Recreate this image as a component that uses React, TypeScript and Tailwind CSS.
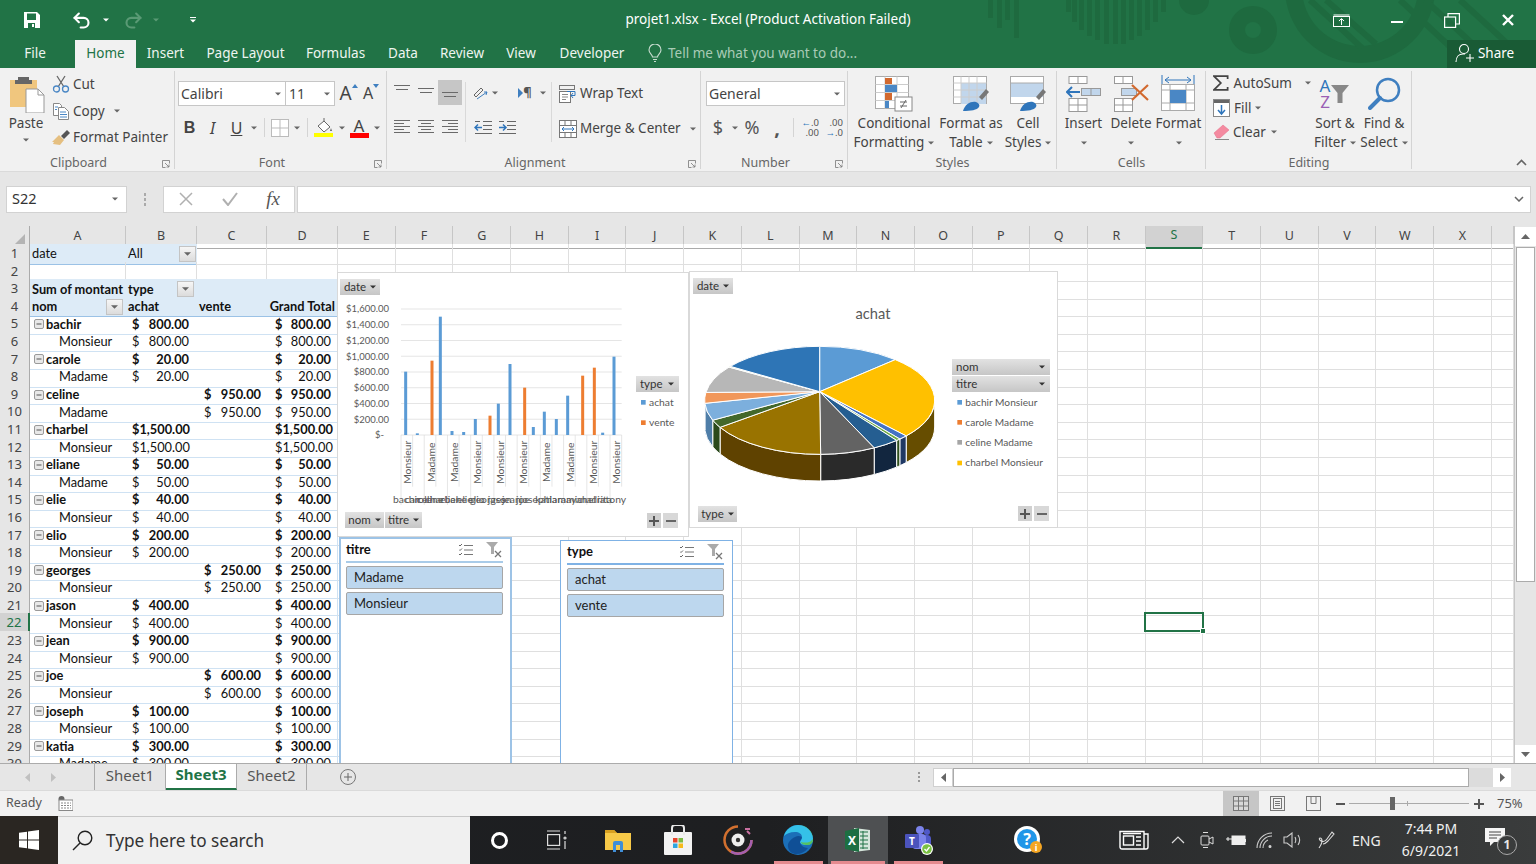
import React from "react";
import { Undo2, Redo2 } from "lucide-react";

const Caret = ({ c = "#666", w = 7 }: { c?: string; w?: number }) => (
  <svg width={w} height={4} viewBox="0 0 8 4" className="shrink-0"><path d="M0 0h8L4 4z" fill={c} /></svg>
);

/* ---------- Title bar ---------- */
function TitleArt() {
  const bars = [[988,18],[997,28],[1005,20],[1014,38],[1066,12],[1072,22],[1079,30],[1087,36],[1095,40],[1104,44],[1113,44],[1121,44],[1129,40],[1137,36],[1145,30],[1153,22],[1161,12]];
  return (
    <svg className="absolute left-[976px] top-0" width={560} height={68} viewBox="976 0 560 68">
      <g fill="#1e6a3f">
        {bars.map(([x, h]) => <rect key={x} x={x} y={0} width={5} height={h} />)}
        <circle cx={1194} cy={0} r={15} />
        <circle cx={1253} cy={30} r={24} />
        <circle cx={1360} cy={-12} r={75} />
      </g>
      <circle cx={1253} cy={30} r={8} fill="#217346" />
      <circle cx={1360} cy={-12} r={58} fill="#217346" />
      <g stroke="#1e6a3f" strokeWidth={6}>
        <path d="M1310 0l52 48M1326 0l50 44M1400 0l60 56M1425 0l50 46M1460 0l50 46" />
      </g>
    </svg>
  );
}

function TitleBar() {
  return (
    <div className="relative h-[68px] bg-[#217346] text-white shrink-0 overflow-hidden">
      <TitleArt />
      <div className="relative flex h-[40px] items-center">
        <div className="w-[64px] flex justify-center">
          <svg width={16} height={16} viewBox="0 0 16 16"><path d="M0 0h13l3 3v13H0z" fill="#fff" /><path d="M3 1.500h9V8H3z" fill="#217346" /><path d="M4 11h7v5H4z" fill="#217346" /><path d="M8 12h2v3H8z" fill="#fff" /></svg>
        </div>
        <div className="w-[28px] flex justify-end"><Undo2 size={21} strokeWidth={2.400} color="#fff" /></div>
        <div className="w-[24px] flex justify-center pl-[4px]"><Caret c="#fff" w={6} /></div>
        <div className="w-[28px] flex justify-end"><Redo2 size={21} strokeWidth={2.400} color="#5a9a75" /></div>
        <div className="w-[24px] flex justify-center"><Caret c="#5a9a75" w={6} /></div>
        <div className="ml-[11px] w-[26px] flex flex-col items-center gap-[1px] pl-[2px]"><div className="w-[6px] h-[1px] bg-white" /><Caret c="#fff" w={6} /></div>
        <div className="absolute left-0 right-0 text-center text-[13.500px] pb-[1px] pointer-events-none">projet1.xlsx - Excel (Product Activation Failed)</div>
        <div className="ml-auto flex items-center">
          <div className="w-[55px] flex justify-center">
            <svg width={17} height={13} viewBox="0 0 17 13"><rect x=".5" y="2.500" width="16" height="10" fill="none" stroke="#fff" /><path d="M.5 1h16" stroke="#fff" /><path d="M8.500 11V5M6 7l2.500-2.500L11 7" fill="none" stroke="#fff" /></svg>
          </div>
          <div className="w-[55px] flex justify-center"><div className="w-[12px] h-[2px] bg-white mt-[4px]" /></div>
          <div className="w-[56px] flex justify-center">
            <svg width={16} height={15} viewBox="0 0 16 15" fill="none" stroke="#fff" strokeWidth={1.200}><rect x=".6" y="4" width="11" height="10.400" /><path d="M4 4V.6h11.400V11H11.600" /></svg>
          </div>
          <div className="w-[56px] flex justify-center">
            <svg width={12} height={12} viewBox="0 0 12 12" stroke="#fff" strokeWidth={2.400}><path d="M1 1l10 10M11 1L1 11" /></svg>
          </div>
        </div>
      </div>
      <div className="relative flex h-[28px] items-center text-[13.500px] text-[#eef5f0]">
        <div className="w-[75px] pl-[1px] text-center pr-[6px] pb-[2px]">File</div>
        <div className="w-[61px] h-[28px] bg-[#f1f1f1] text-[#217346] flex items-center justify-center pb-[2px]">Home</div>
        <div className="w-[59px] text-center pb-[2px]">Insert</div>
        <div className="w-[101px] text-center pb-[2px]">Page Layout</div>
        <div className="w-[79px] text-center pb-[2px]">Formulas</div>
        <div className="w-[56px] text-center pb-[2px]">Data</div>
        <div className="w-[62px] text-center pb-[2px]">Review</div>
        <div className="w-[56px] text-center pb-[2px]">View</div>
        <div className="w-[86px] text-center pb-[2px]">Developer</div>
        <div className="ml-[13px] flex items-center gap-[6px] text-[#a9cbb6] pb-[2px]">
          <svg width={14} height={18} viewBox="0 0 14 18" fill="none" stroke="#c7dccf" strokeWidth={1.100}><path d="M4.500 13c0-2.500-3.500-3.500-3.500-7a6 6 0 0 1 12 0c0 3.500-3.500 4.500-3.500 7z" /><path d="M5 15.500h4M6 17.500h2" /></svg>
          <span>Tell me what you want to do...</span>
        </div>
        <div className="absolute left-[1447px] top-0 w-[89px] h-[28px] bg-[#195b35] flex items-center justify-center gap-[3px] pr-[14px] pb-[2px]">
          <svg width={20} height={20} viewBox="0 0 20 20" fill="none" stroke="#fff" strokeWidth={1.100}><circle cx="9" cy="6" r="4.500" /><path d="M1 19c0-5 3-8 7-8h2" /><path d="M15 11v8M11 15h8" /></svg>
          <span className="text-white">Share</span>
        </div>
      </div>
    </div>
  );
}

/* ---------- Ribbon helpers ---------- */
const Launcher = () => (
  <div className="w-[18px] flex justify-center items-center shrink-0">
    <svg width={8} height={8} viewBox="0 0 8 8" fill="none" stroke="#777" strokeWidth={.800}><path d="M7.500 3.500V.5H.5v7h3" /><path d="M3 3l4 4M7 4.500V7H4.500" /></svg>
  </div>
);

function Group({ w, label, launcher, children }: { w: string; label: string; launcher?: boolean; children: React.ReactNode }) {
  return (
    <div className={`${w} h-[104px] flex flex-col shrink-0 relative`}>
      <div className="h-[87px] flex">{children}</div>
      <div className="h-[17px] flex items-center text-[12.500px] text-[#666]">
        <div className="flex-1 text-center">{label}</div>
        {launcher && <Launcher />}
      </div>
      <div className="absolute right-0 top-[3px] bottom-[3px] w-[1px] bg-[#d4d4d4]" />
    </div>
  );
}

const Big = ({ w, lines, icon }: { w: string; lines: string[]; icon: React.ReactNode }) => (
  <div className={`${w} flex flex-col items-center shrink-0 pt-[6px] text-[13.500px] leading-[19px] text-[#444]`}>
    <div className="h-[39px] flex items-center justify-center">{icon}</div>
    <div className="mt-[1px] whitespace-nowrap">{lines[0]}</div>
    <div className="flex items-center gap-[4px] whitespace-nowrap h-[19px]">
      {lines[1] && <span>{lines[1]}</span>}
      <Caret w={6} />
    </div>
  </div>
);

const Lines = ({ kind }: { kind: "l" | "c" | "r" }) => {
  const long = [3, 9, 15];
  const short = [6, 12];
  const x = (len: number) => (kind === "l" ? 1 : kind === "r" ? 17 - len : 9 - len / 2);
  return (
    <svg width={18} height={17} viewBox="0 0 18 17" stroke="#6a6a6a">
      {long.map(y => <path key={y} d={`M1 ${y - 1.500}h16`} />)}
      {short.map(y => <path key={y} d={`M${x(10)} ${y - 1.500}h10`} />)}
    </svg>
  );
};

const VLines = () => (
  <svg width={18} height={9} viewBox="0 0 18 9" stroke="#6a6a6a"><path d="M1 .500h16M3 4.500h12" /></svg>
);

/* ---------- Ribbon ---------- */
function Clipboard() {
  return (
    <Group w="w-[175px]" label="Clipboard" launcher>
      <div className="w-[52px] flex flex-col items-center pt-[7px] pl-[2px]">
        <svg width={36} height={38} viewBox="0 0 36 38">
          <rect x="1" y="5" width="27" height="27" fill="#f0c67e" />
          <path d="M9 5V2h11v3h3v4H6V5z" fill="#666" />
          <path d="M17 14h12l6 6v18H17z" fill="#fff" stroke="#999" />
          <path d="M29 14v6h6" fill="none" stroke="#999" />
        </svg>
        <div className="text-[13.500px] leading-[18px] text-[#444] mt-[1px] -ml-[2px]">Paste</div>
        <div className="mt-[6px] -ml-[2px]"><Caret w={6} /></div>
      </div>
      <div className="flex flex-col pt-[3px] text-[13.500px] text-[#444]">
        <div className="h-[26.500px] flex items-center gap-[3px]">
          <svg width={18} height={18} viewBox="0 0 18 18" fill="none"><path d="M5 1l7 11M13 1L6 12" stroke="#666" strokeWidth={1.300} /><circle cx="4.500" cy="14" r="3" stroke="#4a87c5" strokeWidth={1.300} /><circle cx="13.500" cy="14" r="3" stroke="#4a87c5" strokeWidth={1.300} /></svg>
          <span>Cut</span>
        </div>
        <div className="h-[26.500px] flex items-center gap-[3px]">
          <svg width={18} height={18} viewBox="0 0 18 18" fill="none" stroke="#888"><path d="M1.500 1.500h6l2 2v10h-8z" fill="#fff" /><path d="M6.500 5.500h6l4 4v8h-10z" fill="#fff" /><path d="M8 10h6M8 12.500h7M8 15h7M3 5h3M3 7.500h2" stroke="#4a87c5" /></svg>
          <span>Copy</span>
          <div className="ml-[6px]"><Caret w={6} /></div>
        </div>
        <div className="h-[26.500px] flex items-center gap-[2px]">
          <svg width={19} height={17} viewBox="0 0 19 17"><path d="M7 6l5 5-4 5-7-1 1-2-2 0z" fill="#e5bf80" /><path d="M9 7l6-6 3 3-6 6z" fill="#555" /></svg>
          <span>Format Painter</span>
        </div>
      </div>
    </Group>
  );
}

function Font() {
  return (
    <Group w="w-[212px]" label="Font" launcher>
      <div className="pl-[3px] pt-[13px] flex flex-col">
        <div className="flex h-[25px] items-center text-[14px] text-[#444]">
          <div className="w-[108px] h-[25px] bg-white border border-[#c6c6c6] flex items-center justify-between pl-[2px] pr-[4px]"><span>Calibri</span><Caret w={6} /></div>
          <div className="w-[49px] h-[25px] bg-white border border-[#c6c6c6] border-l-0 flex items-center justify-between pl-[3px] pr-[4px]"><span>11</span><Caret w={6} /></div>
          <div className="w-[25px] flex justify-center items-start text-[19px] leading-[19px] pl-[2px]"><span>A</span><svg width={6} height={4} viewBox="0 0 6 4"><path d="M3 0l3 4H0z" fill="#3f7fc0" /></svg></div>
          <div className="w-[22px] flex justify-center items-start text-[16px] leading-[19px]"><span>A</span><svg width={6} height={4} viewBox="0 0 6 4"><path d="M0 0h6L3 4z" fill="#3f7fc0" /></svg></div>
        </div>
        <div className="flex h-[25px] items-center mt-[9px] text-[#444]">
          <div className="w-[23px] text-center font-bold text-[16px] font-['Liberation_Sans',sans-serif]">B</div>
          <div className="w-[23px] text-center italic text-[16px] font-['Noto_Sans',sans-serif]">I</div>
          <div className="w-[25px] text-center underline text-[16px]">U</div>
          <div className="ml-[2px]"><Caret w={6} /></div>
          <div className="w-[1px] h-[19px] bg-[#d4d4d4] ml-[7px]" />
          <div className="w-[24px] flex justify-end">
            <svg width={18} height={18} viewBox="0 0 18 18" fill="#fff" stroke="#bbb"><rect x=".5" y=".5" width="17" height="17" /><path d="M9 .5v17M.5 9h17" /></svg>
          </div>
          <div className="ml-[5px]"><Caret w={6} /></div>
          <div className="w-[1px] h-[19px] bg-[#d4d4d4] ml-[7px]" />
          <div className="w-[26px] flex justify-center ml-[3px]">
            <svg width={20} height={20} viewBox="0 0 20 20"><path d="M4 8l6-5 6 6-6 5z" fill="#fff" stroke="#666" /><path d="M10 3V0" stroke="#666" /><path d="M17 10l1 3h-2z" fill="#666" /><rect x="0" y="15" width="19" height="4" fill="#ffff00" /></svg>
          </div>
          <div className="ml-[2px]"><Caret w={6} /></div>
          <div className="w-[26px] flex flex-col items-center ml-[1px]">
            <span className="text-[17px] leading-[15px]">A</span>
            <div className="w-[19px] h-[5px] bg-[#ff0000]" />
          </div>
          <div className="ml-[2px]"><Caret w={6} /></div>
        </div>
      </div>
    </Group>
  );
}

const Slot = ({ w = "w-[24px]", active, children }: { w?: string; active?: boolean; children: React.ReactNode }) => (
  <div className={`${w} h-[25px] flex items-center justify-center shrink-0 ${active ? "bg-[#c6c6c6]" : ""}`}>{children}</div>
);

function Alignment() {
  return (
    <Group w="w-[314px]" label="Alignment" launcher>
      <div className="pl-[3px] pt-[12px] flex">
        <div className="flex flex-col gap-[10px]">
          <div className="flex">
            <Slot><div className="mb-[6px]"><VLines /></div></Slot>
            <Slot><VLines /></Slot>
            <Slot active><div className="mt-[7px]"><VLines /></div></Slot>
          </div>
          <div className="flex">
            <Slot><Lines kind="l" /></Slot>
            <Slot><Lines kind="c" /></Slot>
            <Slot><Lines kind="r" /></Slot>
          </div>
        </div>
        <div className="w-[1px] h-[60px] bg-[#d9d9d9] ml-[3px] mt-[2px]" />
        <div className="flex flex-col gap-[10px]">
          <div className="flex items-center">
            <Slot w="w-[38px]">
              <div className="flex items-center gap-[3px] pl-[1px]">
                <svg width={16} height={14} viewBox="0 0 16 14" fill="none" stroke="#666"><path d="M1 9l7-7 2 2-7 7z" /><path d="M4 13l10-7M14 6l-3 0M14 6l-1 3" stroke="#3f7fc0" /></svg>
                <Caret w={6} />
              </div>
            </Slot>
            <Slot w="w-[44px]">
              <div className="flex items-center gap-[8px] pl-[12px] text-[13px] text-[#555]">
                <svg width={5} height={10} viewBox="0 0 5 10"><path d="M0 0l5 5-5 5z" fill="#3f7fc0" /></svg>
                <span className="-ml-[8px] font-bold">¶</span>
                <Caret w={6} />
              </div>
            </Slot>
          </div>
          <div className="flex">
            <div className="w-[5px]" />
            <Slot>
              <svg width={18} height={15} viewBox="0 0 18 15" fill="none" stroke="#666"><path d="M9 1.500h9M9 5.500h9M9 9.500h9M1 13.500h17M1 1.500h5" /><path d="M8 7.500H1M4 4.500l-3 3 3 3" stroke="#2f75bb" strokeWidth={1.500} /></svg>
            </Slot>
            <Slot>
              <svg width={18} height={15} viewBox="0 0 18 15" fill="none" stroke="#666"><path d="M9 1.500h9M9 5.500h9M9 9.500h9M1 13.500h17M1 1.500h5" /><path d="M1 7.500h7M5 4.500l3 3-3 3" stroke="#2f75bb" strokeWidth={1.500} /></svg>
            </Slot>
          </div>
        </div>
        <div className="w-[1px] h-[60px] bg-[#d9d9d9] ml-[3px] mt-[2px]" />
        <div className="flex flex-col gap-[10px] pl-[7px] pt-[1px] text-[13.500px] text-[#444]">
          <div className="h-[25px] flex items-center gap-[3px]">
            <svg width={18} height={18} viewBox="0 0 18 18" fill="none" stroke="#777"><rect x=".5" y=".5" width="15" height="4" /><rect x=".5" y="6.500" width="11" height="11" fill="#fff" /><path d="M3 9.500h6M3 12h6M3 14.500h4" stroke="#888" /><path d="M8 6.500h8v4h-4M14 8l-2 2.500 2 2.500" stroke="#2f75bb" /></svg>
            <span>Wrap Text</span>
          </div>
          <div className="h-[25px] flex items-center gap-[3px]">
            <svg width={18} height={18} viewBox="0 0 18 18" fill="#fff" stroke="#777"><rect x=".5" y=".5" width="17" height="17" /><path d="M.5 5.500h17M.5 12.500h17M6 .5v5M12 .5v5M6 12.500v5M12 12.500v5" /><path d="M3 9h12M5 7l-2 2 2 2M13 7l2 2-2 2" stroke="#2f75bb" fill="none" /></svg>
            <span>Merge &amp; Center</span>
            <div className="ml-[6px]"><Caret w={6} /></div>
          </div>
        </div>
      </div>
    </Group>
  );
}

function NumberGroup() {
  return (
    <Group w="w-[147px]" label="Number" launcher>
      <div className="pl-[5px] pt-[13px] flex flex-col">
        <div className="w-[139px] h-[25px] bg-white border border-[#c6c6c6] flex items-center justify-between pl-[2px] pr-[4px] text-[14px] text-[#444]"><span>General</span><Caret w={6} /></div>
        <div className="flex items-center h-[25px] mt-[9px] text-[#555]">
          <div className="w-[24px] text-center text-[18px]">$</div>
          <div className="ml-[2px] w-[9px]"><Caret w={6} /></div>
          <div className="w-[22px] text-center text-[18px]">%</div>
          <div className="w-[28px] text-center text-[20px] font-bold leading-[18px]">,</div>
          <div className="w-[1px] h-[19px] bg-[#d4d4d4] ml-[2px] mr-[5px]" />
          <div className="w-[20px] text-[9.500px] leading-[10px] text-right"><div><span className="text-[#2f75bb]">←</span>.0</div><div>.00</div></div>
          <div className="w-[24px] text-[9.500px] leading-[10px] text-right"><div>.00</div><div><span className="text-[#2f75bb]">→</span>.0</div></div>
        </div>
      </div>
    </Group>
  );
}

function Styles() {
  return (
    <Group w="w-[209px]" label="Styles">
      <div className="w-[5px]" />
      <Big w="w-[82px]" lines={["Conditional", "Formatting"]} icon={
        <svg width={38} height={36} viewBox="0 0 38 36">
          <rect x=".5" y=".5" width="33" height="32" fill="#fff" stroke="#aaa" />
          <path d="M10 .5v32M22 .5v32M.5 8.500h33M.5 16.500h33M.5 24.500h33" stroke="#ccc" />
          <rect x="10" y="2" width="7" height="6" fill="#d2692f" /><rect x="10" y="9" width="12" height="7" fill="#4a87c5" /><rect x="10" y="17" width="7" height="7" fill="#d2692f" /><rect x="10" y="25" width="4" height="7" fill="#4a87c5" />
          <rect x="20" y="21" width="17" height="14" fill="#fff" stroke="#888" />
          <path d="M25 26h7M25 30h7M31 24l-5 8" stroke="#666" />
        </svg>
      } />
      <Big w="w-[72px]" lines={["Format as", "Table"]} icon={
        <svg width={37} height={36} viewBox="0 0 37 36">
          <rect x=".5" y=".5" width="33" height="27" fill="#fff" stroke="#aaa" />
          <rect x="8" y="7" width="25" height="21" fill="#c1d6ec" />
          <path d="M8 .5v27M16 .5v27M24 .5v27M.5 7h33M.5 14h33M.5 21h33" stroke="#ccc" />
          <path d="M26 21l7-8 3 3-7 8z" fill="#777" /><path d="M10 35c2-7 8-10 13-9 3 1 4 3 3 5-2 3-8 4-16 4z" fill="#2f75bb" />
        </svg>
      } />
      <Big w="w-[42px]" lines={["Cell", "Styles"]} icon={
        <svg width={37} height={36} viewBox="0 0 37 36">
          <rect x=".5" y=".5" width="33" height="27" fill="#fff" stroke="#aaa" />
          <rect x="1" y="7" width="32" height="14" fill="#c1d6ec" />
          <path d="M.5 7h33" stroke="#aaa" />
          <path d="M26 21l7-8 3 3-7 8z" fill="#777" /><path d="M10 35c2-7 8-10 13-9 3 1 4 3 3 5-2 3-8 4-16 4z" fill="#2f75bb" />
        </svg>
      } />
    </Group>
  );
}

function Cells() {
  return (
    <Group w="w-[149px]" label="Cells">
      <div className="w-[3px]" />
      <Big w="w-[47px]" lines={["Insert", ""]} icon={
        <svg width={35} height={36} viewBox="0 0 35 36" fill="#fff" stroke="#999">
          <rect x="3" y=".5" width="18" height="7" /><path d="M12 .5v7" />
          <rect x="15.500" y="12.500" width="19" height="7" fill="#c1d6ec" /><path d="M25 12.500v7" />
          <rect x="3" y="22.500" width="18" height="13" /><path d="M12 22.500v13M3 29h18" />
          <path d="M14 16H1M6 11l-5 5 5 5" fill="none" stroke="#2f75bb" strokeWidth={2} />
        </svg>
      } />
      <Big w="w-[48px]" lines={["Delete", ""]} icon={
        <svg width={35} height={36} viewBox="0 0 35 36" fill="#fff" stroke="#999">
          <rect x=".5" y=".5" width="18" height="7" /><path d="M9 .5v7" />
          <rect x="7.500" y="12.500" width="15" height="7" fill="#c1d6ec" />
          <rect x=".5" y="22.500" width="18" height="13" /><path d="M9 22.500v13M.5 29h18" />
          <path d="M18 9l16 15M34 9L18 24" fill="none" stroke="#d2692f" strokeWidth={2.200} />
        </svg>
      } />
      <Big w="w-[47px]" lines={["Format", ""]} icon={
        <svg width={35} height={37} viewBox="0 0 35 37" fill="#fff" stroke="#aaa">
          <path d="M4 5h26M8 2L4 5l4 3M26 2l4 3-4 3M1 0v9M33 0v9" fill="none" stroke="#2f75bb" />
          <rect x=".5" y="9.500" width="33" height="26" /><path d="M.5 15h33M.5 28h33M9 9.500v26M25 9.500v26" />
          <rect x="9" y="15" width="16" height="13" fill="#4a87c5" stroke="none" />
        </svg>
      } />
    </Group>
  );
}

function Editing() {
  return (
    <Group w="w-[206px]" label="Editing">
      <div className="w-[7px]" />
      <div className="w-[98px] flex flex-col pt-[3px] text-[13.500px] text-[#444]">
        <div className="h-[24.500px] flex items-center gap-[5px]">
          <svg width={16} height={16} viewBox="0 0 16 16"><path d="M15 4V1H1l7 7-7 7h14v-3" fill="none" stroke="#444" strokeWidth={1.800} /></svg>
          <span>AutoSum</span>
          <div className="ml-[8px]"><Caret w={6} /></div>
        </div>
        <div className="h-[24.500px] flex items-center gap-[4px]">
          <svg width={17} height={18} viewBox="0 0 17 18"><rect x=".5" y=".5" width="16" height="17" fill="#fff" stroke="#888" /><path d="M1 1h15v3H1z" fill="#666" /><path d="M8.500 6v9M5 11l3.500 4L12 11" fill="none" stroke="#2f75bb" strokeWidth={1.500} /></svg>
          <span>Fill</span>
          <Caret w={6} />
        </div>
        <div className="h-[24.500px] flex items-center gap-[3px]">
          <svg width={17} height={16} viewBox="0 0 17 16"><path d="M1 9l9-8 6 5-9 8H4z" fill="#f48aa0" stroke="#e46a85" strokeWidth={.500} /><path d="M2 15.500h14" stroke="#888" /></svg>
          <span>Clear</span>
          <div className="ml-[2px]"><Caret w={6} /></div>
        </div>
      </div>
      <Big w="w-[48px]" lines={["Sort &", "Filter"]} icon={
        <div className="flex items-center">
          <div className="flex flex-col items-center text-[17px] leading-[16px]"><span className="text-[#2f75bb]">A</span><span className="text-[#9a5fb4]">Z</span></div>
          <svg width={20} height={20} viewBox="0 0 20 20"><path d="M1 1h18l-6.500 8v10h-5V9z" fill="#888" /></svg>
        </div>
      } />
      <Big w="w-[50px]" lines={["Find &", "Select"]} icon={
        <svg width={33} height={33} viewBox="0 0 33 33" fill="none" stroke="#3f7fc0"><circle cx="20" cy="13" r="11" strokeWidth={2.500} /><path d="M12 21L2 31" strokeWidth={4} strokeLinecap="round" /></svg>
      } />
    </Group>
  );
}

function Ribbon() {
  return (
    <div className="h-[104px] bg-[#f1f1f1] flex shrink-0 border-b border-[#dadada]">
      <Clipboard /><Font /><Alignment /><NumberGroup /><Styles /><Cells /><Editing />
      <div className="flex-1 flex items-end justify-end pr-[9px] pb-[5px]">
        <svg width={11} height={7} viewBox="0 0 11 7" fill="none" stroke="#666" strokeWidth={1.600}><path d="M1 6l4.500-4.500L10 6" /></svg>
      </div>
    </div>
  );
}

function FormulaBar() {
  return (
    <div className="h-[54px] bg-[#e6e6e6] flex items-center shrink-0 pb-[1px] pt-[1px]">
      <div className="ml-[6px] w-[121px] h-[27px] bg-white border border-[#d2d2d2] flex items-center justify-between pl-[5px] pr-[8px] text-[14.500px] text-[#333]"><span>S22</span><Caret w={6} /></div>
      <div className="w-[36px] flex flex-col items-center gap-[2px]">
        <div className="w-[2px] h-[3px] bg-[#aaa]" /><div className="w-[2px] h-[3px] bg-[#aaa]" /><div className="w-[2px] h-[3px] bg-[#aaa]" />
      </div>
      <div className="w-[132px] h-[27px] bg-white border border-[#d2d2d2] flex items-center">
        <div className="w-[44px] flex justify-center"><svg width={14} height={14} viewBox="0 0 14 14" stroke="#b0b0b0" strokeWidth={1.500}><path d="M1 1l12 12M13 1L1 13" /></svg></div>
        <div className="w-[44px] flex justify-center"><svg width={16} height={14} viewBox="0 0 16 14" fill="none" stroke="#b0b0b0" strokeWidth={2}><path d="M1 7l5 6L15 1" /></svg></div>
        <div className="w-[42px] text-center italic text-[19px] text-[#555] font-['Liberation_Serif',serif]">fx</div>
      </div>
      <div className="ml-[2px] w-[1234px] h-[27px] bg-white border border-[#d2d2d2] flex items-center justify-end pr-[6px]">
        <svg width={10} height={6} viewBox="0 0 10 6" fill="none" stroke="#666" strokeWidth={1.500}><path d="M1 1l4 4 4-4" /></svg>
      </div>
    </div>
  );
}

/* ---------- Sheet ---------- */
const gridCols = "grid grid-cols-[30px_96px_71px_70px_71px_repeat(20,57.7px)_1fr]";
const colNames = ["A","B","C","D","E","F","G","H","I","J","K","L","M","N","O","P","Q","R","S","T","U","V","W","X",""];

type R = { k: "p" | "c"; t: string; col: "b" | "c"; v: string };
const data: R[] = [
  { k:"p",t:"bachir",col:"b",v:"800.00" },{ k:"c",t:"Monsieur",col:"b",v:"800.00" },
  { k:"p",t:"carole",col:"b",v:"20.00" },{ k:"c",t:"Madame",col:"b",v:"20.00" },
  { k:"p",t:"celine",col:"c",v:"950.00" },{ k:"c",t:"Madame",col:"c",v:"950.00" },
  { k:"p",t:"charbel",col:"b",v:"1,500.00" },{ k:"c",t:"Monsieur",col:"b",v:"1,500.00" },
  { k:"p",t:"eliane",col:"b",v:"50.00" },{ k:"c",t:"Madame",col:"b",v:"50.00" },
  { k:"p",t:"elie",col:"b",v:"40.00" },{ k:"c",t:"Monsieur",col:"b",v:"40.00" },
  { k:"p",t:"elio",col:"b",v:"200.00" },{ k:"c",t:"Monsieur",col:"b",v:"200.00" },
  { k:"p",t:"georges",col:"c",v:"250.00" },{ k:"c",t:"Monsieur",col:"c",v:"250.00" },
  { k:"p",t:"jason",col:"b",v:"400.00" },{ k:"c",t:"Monsieur",col:"b",v:"400.00" },
  { k:"p",t:"jean",col:"b",v:"900.00" },{ k:"c",t:"Monsieur",col:"b",v:"900.00" },
  { k:"p",t:"joe",col:"c",v:"600.00" },{ k:"c",t:"Monsieur",col:"c",v:"600.00" },
  { k:"p",t:"joseph",col:"b",v:"100.00" },{ k:"c",t:"Monsieur",col:"b",v:"100.00" },
  { k:"p",t:"katia",col:"b",v:"300.00" },{ k:"c",t:"Madame",col:"b",v:"300.00" },
];

const Money = ({ v, bold, pad }: { v: string; bold?: boolean; pad: string }) => (
  <div className={`flex justify-between w-full ${pad} ${bold ? "font-bold" : ""}`}><span>$</span><span>{v}</span></div>
);

const FilterBtn = () => (
  <div className="w-[17px] h-[16px] bg-linear-to-b from-[#f6f6f6] to-[#dcdcdc] border border-[#c4c4c4] flex items-center justify-center shrink-0"><Caret c="#666" w={7} /></div>
);

const Empty = ({ n }: { n: number }) => <>{Array.from({ length: n }).map((_, i) => <div key={i} className="border-r border-b border-[#dfdfdf]" />)}</>;

function RowHead({ n }: { n: number }) {
  const sel = n === 22;
  return (
    <div className={`flex items-center justify-center text-[13px] font-['Noto_Sans',sans-serif] border-b border-[#c6c6c6] border-r ${sel ? "bg-[#d2d2d2] text-[#217346] border-r-[#217346] border-r-2" : "bg-[#e6e6e6] text-[#444] border-r-[#ababab]"}`}>{n}</div>
  );
}

const hdr = "bg-[#ddebf7] flex items-center px-[2px] font-bold whitespace-nowrap";

function Sheet() {
  return (
    <div className="w-[1514px] h-[537px] relative overflow-hidden bg-white font-['Lato',sans-serif] text-[12.800px] text-[#111]">
      {/* column header */}
      <div className={`${gridCols} h-[18px] bg-[#e6e6e6] font-['Noto_Sans',sans-serif] text-[12.500px] text-[#444]`}>
        <div className="border-r border-b border-[#ababab] flex items-end justify-end pr-[4px] pb-[3px]">
          <svg width={11} height={11} viewBox="0 0 11 11"><path d="M11 0v11H0z" fill="#b4b4b4" /></svg>
        </div>
        {colNames.map((c, i) => (
          <div key={i} className={`flex items-center justify-center pb-[2px] border-r border-[#c6c6c6] ${c === "S" ? "bg-[#d2d2d2] text-[#217346] border-b-2 border-b-[#217346]" : "border-b border-b-[#ababab]"}`}>{c}</div>
        ))}
      </div>
      {/* row 1 */}
      <div className={`${gridCols} h-[17.600px]`}>
        <RowHead n={1} />
        <div className="bg-[#ddebf7] border-b border-[#9bc2e6] flex items-center pl-[2px]">date</div>
        <div className="bg-[#ddebf7] border-b border-[#9bc2e6] flex items-center justify-between pl-[2px]"><span>All</span><div className="mr-[1px]"><FilterBtn /></div></div>
        <Empty n={23} />
      </div>
      {/* row 2 */}
      <div className={`${gridCols} h-[17.600px]`}>
        <RowHead n={2} />
        <Empty n={25} />
      </div>
      {/* row 3 */}
      <div className={`${gridCols} h-[17.600px]`}>
        <RowHead n={3} />
        <div className={hdr}>Sum of montant</div>
        <div className={`${hdr} justify-between`}><span>type</span><div className="mr-[1px]"><FilterBtn /></div></div>
        <div className={hdr} />
        <div className={hdr} />
        <Empty n={21} />
      </div>
      {/* row 4 */}
      <div className={`${gridCols} h-[17.600px]`}>
        <RowHead n={4} />
        <div className={`${hdr} border-b border-[#9bc2e6] justify-between`}><span>nom</span><div className="mr-[1px]"><FilterBtn /></div></div>
        <div className={`${hdr} border-b border-[#9bc2e6]`}>achat</div>
        <div className={`${hdr} border-b border-[#9bc2e6]`}>vente</div>
        <div className="bg-[#ddebf7] flex items-center justify-end pr-[3px] font-bold whitespace-nowrap border-b border-[#9bc2e6]">Grand Total</div>
        <Empty n={21} />
      </div>
      {data.map((r, i) => {
        const bold = r.k === "p";
        return (
          <div key={i} className={`${gridCols} h-[17.600px]`}>
            <RowHead n={i + 5} />
            <div className={`flex items-center border-b border-[#cfe2f3] ${bold ? "font-bold pl-[4px] gap-[2px]" : "pl-[29px]"}`}>
              {bold && (
                <svg width={10} height={10} viewBox="0 0 10 10"><rect x=".5" y=".5" width="9" height="9" rx="1.500" fill="#e8e8e8" stroke="#9a9a9a" /><path d="M2.500 5h5" stroke="#555" /></svg>
              )}
              <span>{r.t}</span>
            </div>
            <div className="flex items-center border-b border-[#cfe2f3]">{r.col === "b" && <Money v={r.v} bold={bold} pad="pl-[6px] pr-[8px]" />}</div>
            <div className="flex items-center border-b border-[#cfe2f3]">{r.col === "c" && <Money v={r.v} bold={bold} pad="pl-[7px] pr-[6px]" />}</div>
            <div className="flex items-center border-b border-r border-[#cfe2f3]"><Money v={r.v} bold={bold} pad="pl-[8px] pr-[6px]" /></div>
            <Empty n={21} />
          </div>
        );
      })}
      {/* selected cell */}
      <div className="absolute left-[1144px] top-[386px] w-[60px] h-[20px] border-2 border-[#217346]">
        <div className="absolute -right-[4px] -bottom-[4px] w-[6px] h-[6px] bg-[#217346] border border-white" />
      </div>
      <ColumnChart />
      <PieChart />
      <Slicer cls="left-[339px] top-[311px]" title="titre" items={["Madame", "Monsieur"]} thick />
      <Slicer cls="left-[560px] top-[314px]" title="type" items={["achat", "vente"]} />
    </div>
  );
}

const FieldBtn = ({ cls, label, wide }: { cls: string; label: string; wide?: boolean }) => (
  <div className={`absolute ${cls} h-[16px] bg-linear-to-b from-[#e2e2e2] to-[#c6c6c6] flex items-center ${wide ? "justify-between pl-[4px] pr-[5px]" : "justify-center gap-[4px]"} text-[11.500px] text-[#333]`}>
    <span>{label}</span><Caret c="#333" w={6} />
  </div>
);

const PlusMinus = ({ cls }: { cls: string }) => (
  <div className={`absolute ${cls} flex gap-[2px]`}>
    <div className="w-[14px] h-[15px] bg-[#d0d0d0] flex items-center justify-center"><svg width={10} height={10} viewBox="0 0 10 10" stroke="#555" strokeWidth={2}><path d="M5 0v10M0 5h10" /></svg></div>
    <div className="w-[15px] h-[15px] bg-[#d8d8d8] flex items-center justify-center"><svg width={10} height={10} viewBox="0 0 10 10" stroke="#666" strokeWidth={2}><path d="M0 5h10" /></svg></div>
  </div>
);

function ColumnChart() {
  const x0 = 198, cw = 34.84;
  const ticks = ["$1,600.00","$1,400.00","$1,200.00","$1,000.00","$800.00","$600.00","$400.00","$200.00"];
  const bars: [number, number, string][] = [[212,305,"b"],[247,490,"b"],[291,272,"o"],[316,140,"b"],[351,483,"b"],[386,486,"b"],[421,447,"b"],[465,437,"o"],[490,401,"b"],[525,282,"b"],[569,353,"o"],[595,471,"b"],[628,425,"b"],[664,447,"b"],[698,377,"b"],[743,317,"o"],[778,293,"o"],[803,488,"b"],[837,260,"b"]];
  const rot: [number, string][] = [[218,"Monsieur"],[288,"Madame"],[358,"Madame"],[428,"Monsieur"],[495,"Monsieur"],[565,"Monsieur"],[635,"Madame"],[705,"Madame"],[775,"Monsieur"],[845,"Monsieur"]];
  const names = ["bachir","carole","celine","charbel","eliane","elie","elio","georges","jason","jean","joe","joseph","katia","lara","maya","michel","nadia","rita","tony"];
  return (
    <div className="absolute left-[337px] top-[46px] w-[352px] h-[265px] bg-white border border-[#d9d9d9]">
      <svg width={352} height={265} viewBox="6 6 1056 795" className="absolute -left-px -top-px font-['Lato',sans-serif]" fontSize={31} fill="#595959">
        {Array.from({ length: 9 }).map((_, i) => <path key={i} d={`M198 ${117 + i * 47.25}H860`} stroke="#e0e0e0" strokeWidth={2.500} />)}
        {ticks.map((t, i) => <text key={t} x={162} y={127 + i * 47.25} textAnchor="end" fontSize={28.500}>{t}</text>)}
        <text x={147} y={505} textAnchor="end" fontSize={28.500}>$-</text>
        {Array.from({ length: 20 }).map((_, i) => <path key={i} d={`M${x0 + cw * i} 495V${i % 2 === 0 ? 705 : 650}`} stroke="#d9d9d9" strokeWidth={2} />)}
        {bars.map(([x, y, c], i) => <rect key={i} x={x - 4.500} y={y} width={9} height={495 - y} fill={c === "b" ? "#5b9bd5" : "#ed7d31"} />)}
        {rot.map(([x, t], i) => <text key={i} transform={`translate(${x + 11} 577) rotate(-90)`} textAnchor="middle">{t}</text>)}
        {names.map((n, i) => <text key={n} x={x0 + cw * (i + 0.5)} y={698} textAnchor="middle">{n}</text>)}
        <rect x={918} y={390} width={14} height={14} fill="#5b9bd5" />
        <text x={942} y={407}>achat</text>
        <rect x={918} y={451} width={14} height={14} fill="#ed7d31" />
        <text x={942} y={469}>vente</text>
      </svg>
      <FieldBtn cls="left-[2px] top-[6px] w-[40px]" label="date" />
      <FieldBtn cls="left-[298px] top-[103px] w-[43px]" label="type" wide />
      <FieldBtn cls="left-[7px] top-[239px] w-[39px]" label="nom" />
      <FieldBtn cls="left-[47px] top-[239px] w-[37px]" label="titre" />
      <PlusMinus cls="left-[309px] top-[240px]" />
    </div>
  );
}

function PieChart() {
  const cx = 395, cy = 391, rx = 345, ry = 162, ax = 395, ay = 365, depth = 80;
  const pt = (d: number, dy = 0) => {
    const r = (d * Math.PI) / 180;
    return `${(cx + rx * Math.sin(r)).toFixed(1)} ${(cy + dy - ry * Math.cos(r)).toFixed(1)}`;
  };
  const sl: [number, number, string, string][] = [
    [0, 41.1, "#5b9bd5", "#3a6b99"],
    [41.1, 131.2, "#ffc000", "#664d00"],
    [131.2, 135.8, "#4472c4", "#1f3864"],
    [135.8, 138, "#70ad47", "#2f4f1c"],
    [138, 151.7, "#255e91", "#12263f"],
    [151.7, 179.5, "#636363", "#2a2a2a"],
    [179.5, 240, "#997300", "#5f4200"],
    [240, 248.4, "#43682b", "#2b4a1c"],
    [248.4, 266.8, "#7cafdd", "#4f7ea8"],
    [266.8, 278.4, "#f1975a", "#a05a28"],
    [278.4, 308, "#b7b7b7", "#777"],
    [308, 309, "#a9d18e", "#777"],
    [309, 360, "#2e75b6", "#1f4e79"],
  ];
  const side = sl.filter(s => s[1] > 90 && s[0] < 270).map(s => {
    const a = Math.max(s[0], 90), b = Math.min(s[1], 270);
    return { d: `M${pt(a)}A${rx} ${ry} 0 0 1 ${pt(b)}L${pt(b, depth)}A${rx} ${ry} 0 0 0 ${pt(a, depth)}Z`, c: s[3] };
  });
  const leg: [number, string, string][] = [[407,"#5b9bd5","bachir Monsieur"],[467,"#ed7d31","carole Madame"],[527,"#a5a5a5","celine Madame"],[589,"#ffc000","charbel Monsieur"]];
  return (
    <div className="absolute left-[689px] top-[45px] w-[369px] h-[257px] bg-white border border-[#d9d9d9]">
      <svg width={369} height={257} viewBox="3 3 1107 771" className="absolute -left-px -top-px font-['Lato',sans-serif]" fill="#595959">
        <text x={555} y={147} textAnchor="middle" fontSize={44}>achat</text>
        {side.map((s, i) => <path key={i} d={s.d} fill={s.c} stroke="#fff" strokeWidth={3} />)}
        {sl.map((s, i) => <path key={i} d={`M${ax} ${ay}L${pt(s[0])}A${rx} ${ry} 0 ${s[1] - s[0] > 180 ? 1 : 0} 1 ${pt(s[1])}Z`} fill={s[2]} stroke="#fff" strokeWidth={3} />)}
        {leg.map(([y, c, t]) => (
          <g key={t}>
            <rect x={808} y={y - 17} width={14} height={14} fill={c} />
            <text x={832} y={y} fontSize={30.500}>{t}</text>
          </g>
        ))}
      </svg>
      <FieldBtn cls="left-[3px] top-[6px] w-[40px]" label="date" />
      <FieldBtn cls="left-[8px] top-[234px] w-[39px]" label="type" />
      <FieldBtn cls="left-[262px] top-[87px] w-[98px]" label="nom" wide />
      <FieldBtn cls="left-[262px] top-[104px] w-[98px]" label="titre" wide />
      <PlusMinus cls="left-[328px] top-[234px]" />
    </div>
  );
}

function Slicer({ cls, title, items, thick }: { cls: string; title: string; items: string[]; thick?: boolean }) {
  return (
    <div className={`absolute ${cls} w-[173px] h-[300px] bg-white ${thick ? "border-2 border-[#9dc3e6] pl-[5px] pr-[7px]" : "border border-[#7fb2e5] pl-[6px] pr-[8px]"} font-['Lato',sans-serif]`}>
      <div className={`flex items-center h-[24px] border-b-2 ${thick ? "border-[#a9cbe8]" : "border-[#7fb2e5]"} font-bold text-[13px] text-[#111]`}>
        <span className="flex-1">{title}</span>
        <svg width={14} height={14} viewBox="0 0 14 14" stroke="#777" fill="none"><path d="M5 2.500h9M5 7h9M5 11.500h9" /><path d="M0 2l1 1 2-2M0 6.500l1 1 2-2M0 11l1 1 2-2" stroke="#666" /></svg>
        <svg className="ml-[13px] mr-[1px]" width={16} height={16} viewBox="0 0 16 16"><path d="M0 0h12L8 5v7H5V5z" fill="#aaa" /><path d="M9 9l6 6M15 9l-6 6" stroke="#777" strokeWidth={1.300} /></svg>
      </div>
      <div className="flex flex-col gap-[3px] mt-[3px]">
        {items.map(t => (
          <div key={t} className="h-[23px] bg-[#bdd7ee] border border-[#a6a6a6] rounded-[2px] flex items-center pl-[7px] text-[13px] text-[#222]">{t}</div>
        ))}
      </div>
    </div>
  );
}

function VScroll() {
  return (
    <div className="w-[22px] h-[537px] bg-[#e6e6e6] flex flex-col items-center border-l border-[#c6c6c6]">
      <div className="h-[19px] w-full bg-white flex items-center justify-center mt-[1px]"><svg width={9} height={5} viewBox="0 0 9 5"><path d="M0 5l4.500-5L9 5z" fill="#666" /></svg></div>
      <div className="w-[19px] h-[335px] bg-white border border-[#ababab] mt-[1px]" />
      <div className="flex-1" />
      <div className="h-[18px] w-full bg-white flex items-center justify-center"><svg width={9} height={5} viewBox="0 0 9 5"><path d="M0 0l4.500 5L9 0z" fill="#666" /></svg></div>
    </div>
  );
}

function TabBar() {
  const tab = "h-[26px] flex items-center justify-center text-[15px] pb-[3px] border-r border-[#ababab]";
  return (
    <div className="h-[27px] bg-[#e6e6e6] flex items-center shrink-0 border-t border-[#ababab]">
      <div className="w-[95px] h-full flex items-center border-r border-[#ababab]">
        <svg className="ml-[25px]" width={5} height={9} viewBox="0 0 5 9"><path d="M5 0L0 4.500 5 9z" fill="#c0c0c0" /></svg>
        <svg className="ml-[21px]" width={5} height={9} viewBox="0 0 5 9"><path d="M0 0l5 4.500L0 9z" fill="#c0c0c0" /></svg>
      </div>
      <div className={`${tab} w-[71px] text-[#555]`}>Sheet1</div>
      <div className="h-[26px] w-[71px] flex items-center justify-center text-[15px] pb-[2px] font-bold bg-white text-[#217346] border-b-2 border-[#217346] border-r border-r-[#ababab] -mt-[1px]">Sheet3</div>
      <div className={`${tab} w-[70px] text-[#555]`}>Sheet2</div>
      <div className="ml-[33px] w-[16px] h-[16px] rounded-full border border-[#777] flex items-center justify-center">
        <svg width={8} height={8} viewBox="0 0 8 8" stroke="#666"><path d="M4 0v8M0 4h8" /></svg>
      </div>
      <div className="ml-[562px] flex flex-col gap-[2px]">
        <div className="w-[2px] h-[2px] bg-[#999]" /><div className="w-[2px] h-[2px] bg-[#999]" /><div className="w-[2px] h-[2px] bg-[#999]" />
      </div>
      <div className="ml-[13px] w-[20px] h-[19px] bg-white border border-[#d0d0d0] flex items-center justify-center"><svg width={5} height={9} viewBox="0 0 5 9"><path d="M5 0L0 4.500 5 9z" fill="#666" /></svg></div>
      <div className="w-[516px] h-[19px] bg-white border border-[#ababab]" />
      <div className="w-[24px] h-[19px] bg-[#dcdcdc]" />
      <div className="w-[18px] h-[19px] bg-white flex items-center justify-center"><svg width={5} height={9} viewBox="0 0 5 9"><path d="M0 0l5 4.500L0 9z" fill="#666" /></svg></div>
    </div>
  );
}

function StatusBar() {
  return (
    <div className="h-[26px] bg-[#f1f1f1] flex items-center shrink-0 text-[12.500px] text-[#555] border-t border-[#dadada]">
      <span className="ml-[6px] w-[52px]">Ready</span>
      <svg width={15} height={15} viewBox="0 0 15 15"><circle cx="3.500" cy="3" r="3" fill="#666" /><rect x="1" y="4" width="14" height="10.500" fill="#fff" stroke="#888" /><path d="M3 7h10M3 9.500h10M3 12h10" stroke="#888" strokeDasharray="2 1" /></svg>
      <div className="ml-[1150px] w-[36px] h-[25px] bg-[#c6c6c6] flex items-center justify-center">
        <svg width={16} height={15} viewBox="0 0 16 15" fill="#d8d8d8" stroke="#777"><rect x=".5" y=".5" width="15" height="14" /><path d="M5.500.5v14M10.500.5v14M.5 5h15M.5 10h15" /></svg>
      </div>
      <div className="w-[36px] flex justify-center">
        <svg width={15} height={15} viewBox="0 0 15 15" fill="none" stroke="#777"><rect x=".5" y=".5" width="14" height="14" /><rect x="3.500" y="2.500" width="8" height="10" /><path d="M5 5.500h5M5 7.500h5M5 9.500h5" /></svg>
      </div>
      <div className="w-[36px] flex justify-center">
        <svg width={15} height={15} viewBox="0 0 15 15" fill="none" stroke="#777"><rect x=".5" y=".5" width="14" height="14" /><path d="M5 .5v7h5V.5" /></svg>
      </div>
      <div className="ml-[5px] w-[9px] h-[2px] bg-[#555]" />
      <div className="ml-[4px] w-[120px] h-[1px] bg-[#aaa] flex items-center">
        <div className="ml-[41px] w-[5px] h-[13px] bg-[#666]" />
        <div className="ml-[12px] w-[1px] h-[5px] bg-[#aaa]" />
      </div>
      <svg className="ml-[5px]" width={10} height={10} viewBox="0 0 10 10" stroke="#555" strokeWidth={2}><path d="M5 0v10M0 5h10" /></svg>
      <span className="ml-[13px] text-[13px]">75%</span>
    </div>
  );
}

function TbSlot({ children, active, bar, w = "w-[60px]" }: { children: React.ReactNode; active?: boolean; bar?: string; w?: string }) {
  return (
    <div className={`relative ${w} h-[48px] flex items-center justify-center shrink-0 ${active ? "bg-[#4e5052]" : ""}`}>
      {children}
      {bar && <div className={`absolute bottom-0 h-[3px] ${bar} bg-[#e58a8f]`} />}
    </div>
  );
}

function Taskbar() {
  return (
    <div className="h-[48px] flex shrink-0 text-white bg-linear-to-r from-[#1c1e21] via-[#1e1f21] to-[#3a3c3c]">
      <div className="w-[58px] bg-[#2a2622] flex items-center justify-center">
        <svg width={20} height={20} viewBox="0 0 20 20" fill="#fff"><path d="M0 2.800l8-1.100v7.700H0zM9 1.500L20 0v9.400H9zM0 10.500h8v7.800l-8-1.100zM9 10.500h11V20L9 18.400z" /></svg>
      </div>
      <div className="w-[412px] bg-[#f0f0f0] border-t border-[#c8c8c8] flex items-center pl-[14px] gap-[13px] text-[#333] text-[17.200px]">
        <svg width={21} height={21} viewBox="0 0 21 21" fill="none" stroke="#222" strokeWidth={1.400}><circle cx="13" cy="8" r="6.800" /><path d="M8 13l-7 7" /></svg>
        <span>Type here to search</span>
      </div>
      <TbSlot w="w-[58px]"><div className="w-[17px] h-[17px] rounded-full border-[3px] border-white" /></TbSlot>
      <TbSlot w="w-[58px]">
        <svg width={20} height={20} viewBox="0 0 20 20" fill="none" stroke="#ddd" strokeWidth={1.200}><path d="M0 1h13M0 19h13" /><rect x=".6" y="4.600" width="12" height="10.800" /><path d="M18 1v3" /><circle cx="18" cy="8" r="1" /><path d="M18 11v8" /></svg>
      </TbSlot>
      <div className="w-[2px]" />
      <TbSlot>
        <svg width={26} height={24} viewBox="0 0 26 24"><path d="M0 2h9l3 3h14v17H0z" fill="#f7c948" /><path d="M0 2h9l3 3H0z" fill="#d8a020" /><path d="M8 24v-9a2 2 0 0 1 2-2h6a2 2 0 0 1 2 2v9h-3v-7h-4v7z" fill="#3f8ed8" /></svg>
      </TbSlot>
      <TbSlot>
        <svg width={28} height={30} viewBox="0 0 28 30"><rect y="7" width="28" height="23" rx="1" fill="#f2f2f2" /><path d="M8 10V3a3 3 0 0 1 3-3h6a3 3 0 0 1 3 3v7" fill="none" stroke="#e8e8e8" strokeWidth={2} /><rect x="9" y="13" width="4.500" height="4.500" fill="#e8452c" /><rect x="14.500" y="13" width="4.500" height="4.500" fill="#7cbb42" /><rect x="9" y="18.500" width="4.500" height="4.500" fill="#2ea6e0" /><rect x="14.500" y="18.500" width="4.500" height="4.500" fill="#f5b91a" /></svg>
      </TbSlot>
      <TbSlot>
        <svg width={30} height={30} viewBox="0 0 30 30" fill="none"><path d="M15 1.500a13.500 13.500 0 1 0 13.500 13.500" stroke="#d2702f" strokeWidth={2.500} /><path d="M28.500 15A13.500 13.500 0 0 1 8 26.600" stroke="#a45fb0" strokeWidth={2.500} /><path d="M24 6l3 3M22 4l5 0" stroke="#c86fa0" strokeWidth={2} /><circle cx="15" cy="15" r="6.500" fill="#eee" /><circle cx="15" cy="15" r="2.200" fill="#333" /></svg>
      </TbSlot>
      <TbSlot bar="w-[49px]">
        <svg width={30} height={30} viewBox="0 0 30 30"><circle cx="15" cy="15" r="15" fill="#1b6fb8" /><path d="M1 11C3 4 9 0 15 0c8 0 15 6 15 14 0 4-3 6-7 6-3 0-6-1-6-3 0-1 2-2 2-5 0-3-3-5-7-5-5 0-9 2-11 4z" fill="#35c1e8" /><path d="M30 14c0-3-2-8-6-11-3-2-6-3-9-3 8 0 15 6 15 14z" fill="#56c15f" /><path d="M24 20c-3 0-6-1-6-3 3 1 9 1 11-2 1-1 1-1 1-1 0 4-2 6-6 6z" fill="#56c15f" /><path d="M12 12c3-2 7-1 7 1 0 0-2 2-2 4 0 3 4 6 8 6-3 4-7 6-12 6-3 0-7-2-8-7-1-4 3-8 7-10z" fill="#0f4f96" /></svg>
      </TbSlot>
      <TbSlot active bar="w-[54px]">
        <svg width={26} height={26} viewBox="0 0 26 26"><path d="M9 1l16 2v20L9 25z" fill="#d6e6dc" /><path d="M15 5h8M15 9h8M15 13h8M15 17h8M15 21h8M18 4v18" stroke="#217346" /><path d="M0 4l14-3v24L0 22z" fill="#1d6f42" /><text x="7" y="17.500" fontSize="12" fontWeight="700" fill="#fff" textAnchor="middle">X</text></svg>
      </TbSlot>
      <TbSlot bar="w-[49px]">
        <svg width={30} height={30} viewBox="0 0 30 30"><circle cx="17" cy="5" r="4" fill="#7b83eb" /><circle cx="24" cy="7" r="3" fill="#5059c9" /><rect x="16" y="10" width="12" height="12" rx="4" fill="#5059c9" /><rect x="9" y="9" width="14" height="15" rx="4" fill="#7b83eb" /><rect x="2" y="9" width="14" height="14" rx="1" fill="#4b53bc" /><text x="9" y="20" fontSize="10" fontWeight="700" fill="#fff" textAnchor="middle">T</text><circle cx="24" cy="24" r="6" fill="#fff" /><circle cx="24" cy="24" r="4.800" fill="#7ac143" /><path d="M21.500 24l2 2 3-4" fill="none" stroke="#fff" strokeWidth={1.300} /></svg>
      </TbSlot>
      <div className="w-[96px] flex items-center justify-end pr-[1px] shrink-0">
        <svg width={30} height={30} viewBox="0 0 30 30"><circle cx="14" cy="14" r="13" fill="#fff" /><circle cx="14" cy="14" r="10" fill="#2196e8" /><text x="14" y="20" fontSize="16" fontWeight="700" fill="#fff" textAnchor="middle">?</text><circle cx="23" cy="22" r="6" fill="#f5a623" /><text x="23" y="26" fontSize="9" fontWeight="700" fill="#fff" textAnchor="middle">i</text></svg>
      </div>
      <div className="flex items-center ml-[75px] text-[#e8e8e8]">
        <svg width={30} height={20} viewBox="0 0 30 20" fill="none" stroke="#fff" strokeWidth={1.400}><path d="M1 1.500h24V19H3a2 2 0 0 1-2-2zM25 4h4v13a2 2 0 0 1-2 2h-2" /><rect x="4.500" y="6" width="10" height="9" /><path d="M17 7h5M17 11h5M17 15h5M4 3.500h18" /></svg>
        <svg className="ml-[22px]" width={14} height={8} viewBox="0 0 14 8" fill="none" stroke="#ddd" strokeWidth={1.200}><path d="M1 7l6-6 6 6" /></svg>
        <svg className="ml-[15px]" width={14} height={18} viewBox="0 0 14 18" fill="none" stroke="#ddd"><rect x="1" y="5" width="8" height="9" rx="1" /><path d="M9 8l4-2v7l-4-2M3 1.500h5M3 16.500h5" /></svg>
        <svg className="ml-[12px]" width={20} height={12} viewBox="0 0 20 12" fill="none" stroke="#eee"><rect x="6" y="2" width="13" height="8.500" fill="#eee" /><path d="M6 5H0M2 3v4" /><path d="M19.500 5v3" /></svg>
        <svg className="ml-[10px]" width={17} height={16} viewBox="0 0 17 16" fill="none" stroke="#ccc" strokeWidth={1.100}><path d="M1 16A15 15 0 0 1 16 1M4 16A12 12 0 0 1 16 4M7 16a9 9 0 0 1 5-8" /><circle cx="14" cy="14.500" r="1" fill="#eee" /></svg>
        <svg className="ml-[10px]" width={19} height={16} viewBox="0 0 19 16" fill="none" stroke="#ccc" strokeWidth={1.100}><path d="M1 5h3l5-4v14l-5-4H1zM12 5c1 2 1 4 0 6M15 3c2 3 2 7 0 10" /></svg>
        <svg className="ml-[16px]" width={17} height={18} viewBox="0 0 17 18" fill="none" stroke="#ddd" strokeWidth={1.100}><path d="M1 17c2-3 3-5 3-7s-1-3-2-3c-1 0-1 2 1 3 2 1 4 1 6-2l5-7 2 2-6 7c-2 2-3 3-5 3" /></svg>
        <span className="ml-[17px] text-[14px] w-[34px] text-[#f0f0f0]">ENG</span>
        <div className="ml-[6px] w-[78px] text-center text-[14px] leading-[22px] text-[#f0f0f0]"><div>7:44 PM</div><div>6/9/2021</div></div>
        <div className="relative ml-[15px] w-[32px] h-[30px]">
          <svg width={22} height={20} viewBox="0 0 22 20" className="mt-[3px]"><path d="M0 0h20v14H9l-4 4v-4H0z" fill="#f5f5f5" /><path d="M4 4h12M4 7h12M4 10h8" stroke="#444" /></svg>
          <div className="absolute right-0 bottom-0 w-[20px] h-[20px] rounded-full bg-[#3a3c3c] border border-[#aaa] flex items-center justify-center text-[12px] font-bold">1</div>
        </div>
      </div>
    </div>
  );
}

export default function App() {
  return (
    <div className="w-[1536px] h-[864px] overflow-hidden flex flex-col font-['Noto_Sans',sans-serif] bg-[#e6e6e6]">
      <TitleBar />
      <Ribbon />
      <FormulaBar />
      <div className="flex shrink-0">
        <Sheet />
        <VScroll />
      </div>
      <TabBar />
      <StatusBar />
      <Taskbar />
    </div>
  );
}
